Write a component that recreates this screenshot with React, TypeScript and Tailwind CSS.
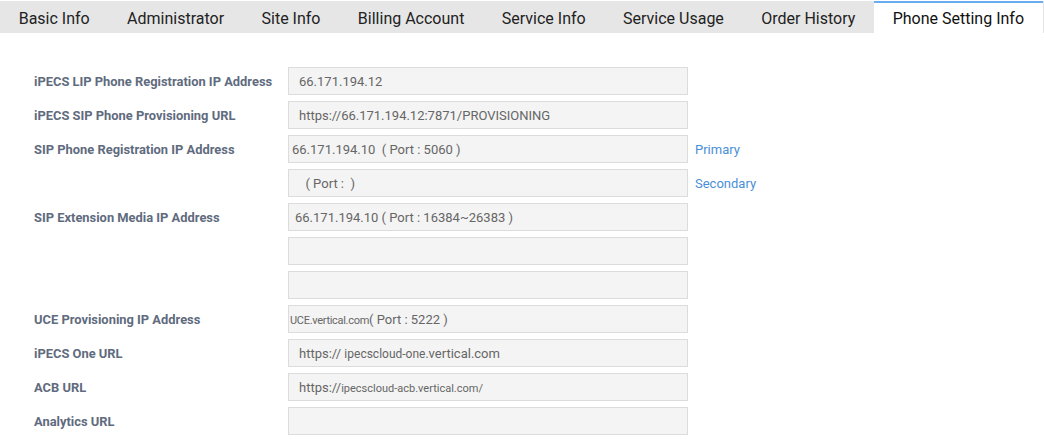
import React from "react";

const tabs = [
  "Basic Info",
  "Administrator",
  "Site Info",
  "Billing Account",
  "Service Info",
  "Service Usage",
  "Order History",
  "Phone Setting Info",
];

type Row = {
  label?: string;
  value?: React.ReactNode;
  pad?: string;
  note?: string;
};

const rows: Row[] = [
  { label: "iPECS LIP Phone Registration IP Address", value: "66.171.194.12", pad: "pl-[10px]" },
  { label: "iPECS SIP Phone Provisioning URL", value: "https://66.171.194.12:7871/PROVISIONING", pad: "pl-[10px]" },
  { label: "SIP Phone Registration IP Address", value: "66.171.194.10  ( Port : 5060 )", pad: "pl-[3px]", note: "Primary" },
  { value: "  ( Port :  )", pad: "pl-[10px]", note: "Secondary" },
  { label: "SIP Extension Media IP Address", value: "66.171.194.10 ( Port : 16384~26383 )", pad: "pl-[6px]" },
  { value: "" },
  { value: "" },
  {
    label: "UCE Provisioning IP Address",
    value: (
      <>
        <span className="text-[11px] tracking-[-0.3px]">UCE.vertical.com</span>( Port : 5222 )
      </>
    ),
    pad: "pl-[1px]",
  },
  {
    label: "iPECS One URL",
    value: (
      <>
        https:// <span className="text-[12px]">ipecscloud-one.</span>vertical.com
      </>
    ),
    pad: "pl-[10px]",
  },
  {
    label: "ACB URL",
    value: (
      <>
        https://<span className="text-[11px]">ipecscloud-acb.vertical.com/</span>
      </>
    ),
    pad: "pl-[10px]",
  },
  { label: "Analytics URL", value: "" },
];

export default function App() {
  return (
    <div className="w-[1044px] h-[440px] bg-white overflow-hidden font-['Roboto',sans-serif]">
      {/* tab strip */}
      <div className="mt-px flex h-8 bg-[#e6e6e6] overflow-hidden">
        {tabs.map((t, i) => {
          const active = i === tabs.length - 1;
          return (
            <div
              key={t}
              className={
                active
                  ? "shrink-0 whitespace-nowrap flex items-center pt-[2px] px-[18.7px] bg-white border-t-2 border-[#6aacf2] text-[16px] text-[#111]"
                  : "shrink-0 whitespace-nowrap flex items-center pt-[2px] px-[18.7px] border-t-2 border-transparent text-[16px] text-[#222]"
              }
            >
              {t}
            </div>
          );
        })}
      </div>

      {/* form */}
      <div className="flex flex-col gap-[6px] pt-[34px] pl-[34px]">
        {rows.map((r, i) => (
          <div key={i} className="flex items-center">
            <div className="w-[254px] pt-[1px] text-[12.9px] font-bold text-[#5f6b7e] whitespace-nowrap">
              {r.label ?? ""}
            </div>
            <div
              className={`w-[400px] h-[28px] flex items-center pt-[1px] bg-[#f4f4f4] border border-[#dcdcdc] text-[13px] text-[#666] whitespace-pre ${r.pad ?? ""}`}
            >
              <span>{r.value}</span>
            </div>
            {r.note && (
              <div className="ml-[7px] pt-[1px] text-[13px] text-[#4a8fd6]">{r.note}</div>
            )}
          </div>
        ))}
      </div>
    </div>
  );
}
